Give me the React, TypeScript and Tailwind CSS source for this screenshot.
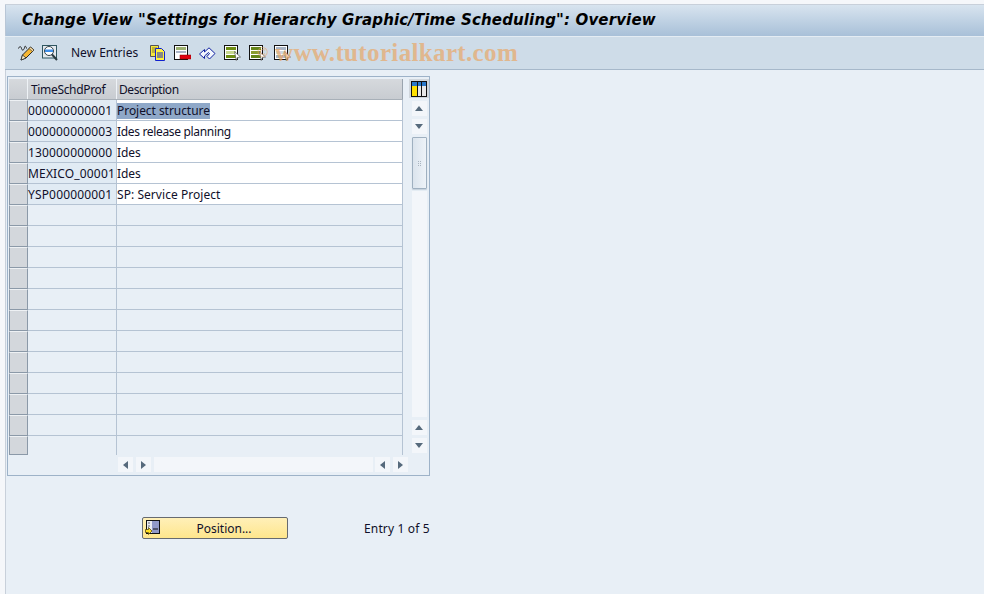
const rows = [
  { key: "000000000001", text: "Project structure", selected: true, track: "tracking-[-0.05px]" },
  { key: "000000000003", text: "Ides release planning", track: "tracking-[-0.33px]" },
  { key: "130000000000", text: "Ides", track: "tracking-[-0.1px]" },
  { key: "MEXICO_00001", text: "Ides", track: "tracking-[-0.1px]" },
  { key: "YSP000000001", text: "SP: Service Project", track: "tracking-[0.05px]" },
  ...Array.from({ length: 12 }, () => ({ key: "", text: "", track: "" })),
];

const PencilIcon = () => (
  <svg width="17" height="16" viewBox="0 0 17 16">
    <path d="M0.5 3.5c1-2.5 2.5-2.5 3 0s2.5 2 3-1 2 0 2 1" fill="none" stroke="#222" />
    <path d="M3 15l1.5-5 8-8 3.5 3-8 8z" fill="#f7b733" stroke="#2a2a2a" />
    <path d="M12.5 2l3.5 3-1.5 1.5-3.5-3z" fill="#f6d9a0" stroke="#2a2a2a" strokeWidth="0.6" />
    <path d="M3 15l1.5-5 3.5 3z" fill="#fff3cf" stroke="#2a2a2a" strokeWidth="0.8" />
  </svg>
);

const FindIcon = () => (
  <svg width="16" height="16" viewBox="0 0 16 16">
    <rect x="0.5" y="0.5" width="14" height="12.5" fill="#e4e9ee" stroke="#2f5660" />
    <circle cx="7" cy="6" r="4.5" fill="#fff" stroke="#33424a" />
    <path d="M3 4.5h8v2.5H3z" fill="#3f8fe8" />
    <path d="M10 9.5l5 5.5" stroke="#2a3a40" strokeWidth="2" />
  </svg>
);

const CopyIcon = () => (
  <svg width="16" height="16" viewBox="0 0 16 16">
    <path d="M0.5 0.5h8v11h-8z" fill="#f6e73c" stroke="#555" />
    <path d="M2 3h5M2 5h5M2 7h3" stroke="#8a8030" />
    <path d="M5.5 3.5h6l3 3v9h-9z" fill="#fff23a" stroke="#1020d0" />
    <path d="M7 8h6M7 10h6M7 12h6" stroke="#1020d0" />
  </svg>
);

const DeleteIcon = () => (
  <svg width="17" height="16" viewBox="0 0 17 16">
    <rect x="0.5" y="0.5" width="13" height="14" fill="#fff" stroke="#111" />
    <rect x="2" y="2" width="10" height="3" fill="#9cb070" />
    <rect x="2" y="6" width="10" height="2" fill="#aab4c8" />
    <rect x="6" y="10" width="11" height="4" fill="#e00010" stroke="#800" strokeWidth="0.5" />
  </svg>
);

const UndoIcon = () => (
  <svg width="17" height="13" viewBox="0 0 17 13">
    <path
      d="M0.5 7L5.5 2.5V5L10 0.8 16 6.5 10.5 12 8 9.5 10.5 6.5 9.5 5.5 5.5 9v2.5z"
      fill="#f4f8ff"
      stroke="#1020a0"
    />
  </svg>
);

const SelectIcon = ({ a, b }: { a: string; b: string }) => (
  <svg width="17" height="16" viewBox="0 0 17 16">
    <rect x="0.5" y="0.5" width="13" height="14" fill="#fff" stroke="#111" />
    <rect x="2" y="2" width="10" height="3" fill={a} />
    <rect x="2" y="6" width="10" height="3" fill={b} />
    <rect x="2" y="10" width="10" height="3" fill={a} />
    <path d="M10.5 6.5l6 5.5-3 .5-1.2 3z" fill="#fff" stroke="#555" strokeWidth="0.7" />
  </svg>
);

const ColumnsIcon = () => (
  <svg width="16" height="16" viewBox="0 0 16 16">
    <rect x="0.5" y="0.5" width="15" height="15" fill="#e8e8e8" stroke="#111" />
    <rect x="1" y="1" width="14" height="4" fill="#2a78c8" />
    <rect x="1" y="5" width="5" height="10" fill="#ffe000" />
    <rect x="6" y="1" width="1" height="14" fill="#111" />
    <rect x="10" y="1" width="1" height="14" fill="#111" />
  </svg>
);

const PositionIcon = () => (
  <svg width="15" height="15" viewBox="0 0 15 15">
    <rect x="1.5" y="0.5" width="13" height="13" fill="#9098c8" stroke="#111" />
    <rect x="2" y="1" width="5" height="12" fill="#e8eaf0" />
    <path d="M8 9h5" stroke="#111" />
    <path d="M3 3h2M3 6h2" stroke="#667" />
    <path d="M0.5 9.5h3v-2l3.5 3.5-3.5 3.5v-2h-3z" fill="#ffe020" stroke="#443300" strokeWidth="0.7" />
  </svg>
);

const Arrow = ({ dir }: { dir: "up" | "down" | "left" | "right" }) => {
  const paths = {
    up: "M0 5L4 0L8 5Z",
    down: "M0 0L8 0L4 5Z",
    left: "M5 0L5 8L0 4Z",
    right: "M0 0L5 4L0 8Z",
  };
  const size = dir === "up" || dir === "down" ? "w-2 h-[5px]" : "w-[5px] h-2";
  const box = dir === "up" || dir === "down" ? "0 0 8 5" : "0 0 5 8";
  return (
    <div className="flex h-[15px] w-[15px] items-center justify-center bg-[#f3f6fa]">
      <svg className={size} viewBox={box}>
        <path d={paths[dir]} fill="#566a7c" />
      </svg>
    </div>
  );
};

const Row = ({ row, last }: { row: (typeof rows)[number]; last: boolean }) => (
  <div className={`flex ${last ? "h-[19px]" : "h-[21px]"}`}>
    <div className="w-[19px] shrink-0 border border-[#8b99a8] border-t-[#eef1f4] bg-[#d3d7dc]" />
    <div
      className={`flex w-[89px] shrink-0 items-center border-r border-[#b5c3d3] pt-px tracking-[0.16px] ${
        last ? "" : "border-b"
      } ${row.key ? "bg-[#e1ebf4]" : ""}`}
    >
      {row.key}
    </div>
    <div
      className={`flex w-[286px] shrink-0 items-center border-r border-[#b5c3d3] pt-px ${row.track} ${
        last ? "" : "border-b"
      } ${row.key ? "bg-white" : ""}`}
    >
      {row.selected ? <span className="bg-[#8fa8c8]">{row.text}</span> : row.text}
    </div>
  </div>
);

const App = () => {
  return (
    <div className="relative flex h-[594px] w-[984px] overflow-hidden bg-[#f5f7fa] font-['Noto_Sans',sans-serif] text-xs text-[#10102a]">
      <div className="w-[5px] shrink-0" />
      <div className="flex min-w-0 flex-1 flex-col">
        <div className="h-[5px] shrink-0 border-b border-[#c8d0da] bg-[#f5f7fa]" />
        <div className="flex h-[31px] shrink-0 items-center border-l border-[#b8c6d6] bg-gradient-to-b from-[#d8e4ef] to-[#a8c0d8] pt-px pl-[16px] font-['DejaVu_Sans',sans-serif] text-[15px] font-bold tracking-[0.14px] text-black italic">
          Change View "Settings for Hierarchy Graphic/Time Scheduling": Overview
        </div>
        <div className="flex h-[34px] shrink-0 items-center border-y border-[#e4ecf3] border-b-[#a6b8ca] bg-[#cedce8] pl-[13px]">
          <PencilIcon />
          <div className="ml-[7px]">
            <FindIcon />
          </div>
          <span className="ml-[13px] w-[66px] whitespace-nowrap">New Entries</span>
          <div className="ml-[13px] flex items-center gap-[8px]">
            <CopyIcon />
            <DeleteIcon />
            <UndoIcon />
            <SelectIcon a="#6f8e14" b="#c8d890" />
            <SelectIcon a="#66861a" b="#8a9c30" />
            <SelectIcon a="#a8b4c4" b="#d0d8e0" />
          </div>
        </div>
        <div className="flex-1 border-l border-[#c8d0da] bg-[#e8eff6] pt-[6px] pl-px">
          <div className="w-[423px] border border-[#9db2c8] pt-[2px] pl-px">
            <div className="flex">
              <div>
                <div className="flex h-[21px] border-b border-[#a8b0b8] bg-gradient-to-b from-[#d6d9dd] to-[#c8ccd1]">
                  <div className="w-[19px] border-r border-[#eef2f6]" />
                  <div className="flex w-[89px] items-center border-r border-[#eef2f6] pt-px pl-[3px] tracking-[-0.33px]">
                    TimeSchdProf
                  </div>
                  <div className="flex w-[286px] items-center border-r border-[#9aa4ae] pt-px pl-[2px] tracking-[-0.45px]">
                    Description
                  </div>
                </div>
                {rows.map((row, i) => (
                  <Row key={i} row={row} last={i === rows.length - 1} />
                ))}
              </div>
              <div className="ml-[6px] flex flex-col items-center">
                <div className="flex h-[19px] w-[20px] items-center justify-center bg-[#d0d6dc]">
                  <ColumnsIcon />
                </div>
                <div className="mt-[3px] flex flex-col gap-[3px]">
                  <Arrow dir="up" />
                  <Arrow dir="down" />
                </div>
                <div className="mt-[3px] flex w-[15px] flex-1 flex-col">
                  <div className="flex h-[52px] shrink-0 items-center justify-center rounded-[1px] border border-[#9fb0c0] bg-gradient-to-r from-[#dbe4ed] to-[#eef3f8] shadow-[0_1px_1px_#c4d0dc]">
                    <div className="grid grid-cols-2 gap-px">
                      {Array.from({ length: 6 }, (_, i) => (
                        <div key={i} className="h-px w-px bg-[#a8b4c0]" />
                      ))}
                    </div>
                  </div>
                  <div className="mt-[2px] flex-1 bg-[#f3f6fa]" />
                </div>
                <div className="mt-[3px] flex flex-col gap-[3px]">
                  <Arrow dir="up" />
                  <Arrow dir="down" />
                </div>
                <div className="h-[2px]" />
              </div>
            </div>
            <div className="flex h-[20px] items-start pt-[2px] pl-[109px]">
              <div className="flex gap-[3px]">
                <Arrow dir="left" />
                <Arrow dir="right" />
              </div>
              <div className="ml-[3px] h-[15px] w-[219px] bg-[#f3f6fa]" />
              <div className="ml-[2px] flex gap-[3px]">
                <Arrow dir="left" />
                <Arrow dir="right" />
              </div>
            </div>
          </div>
          <div className="mt-[41px] flex items-center pl-[135px]">
            <button className="relative flex h-[22px] w-[146px] items-center justify-center rounded-[2px] border border-[#666a70] bg-gradient-to-b from-[#fff0b8] to-[#fee68c] pt-px pl-[18px]">
              <div className="absolute top-[2px] left-[2px]">
                <PositionIcon />
              </div>
              Position...
            </button>
            <span className="ml-[76px] pt-px tracking-[0.15px]">Entry 1 of 5</span>
          </div>
        </div>
      </div>
      <div className="pointer-events-none absolute top-[36px] left-[257px] flex items-center font-['Liberation_Serif',serif] text-[25px] font-bold tracking-[0.35px] whitespace-nowrap text-[#e8a868] opacity-70">
        <span className="w-[18px] text-[15px]">©</span>
        <span>www.tutorialkart.com</span>
      </div>
    </div>
  );
};

export default App;
